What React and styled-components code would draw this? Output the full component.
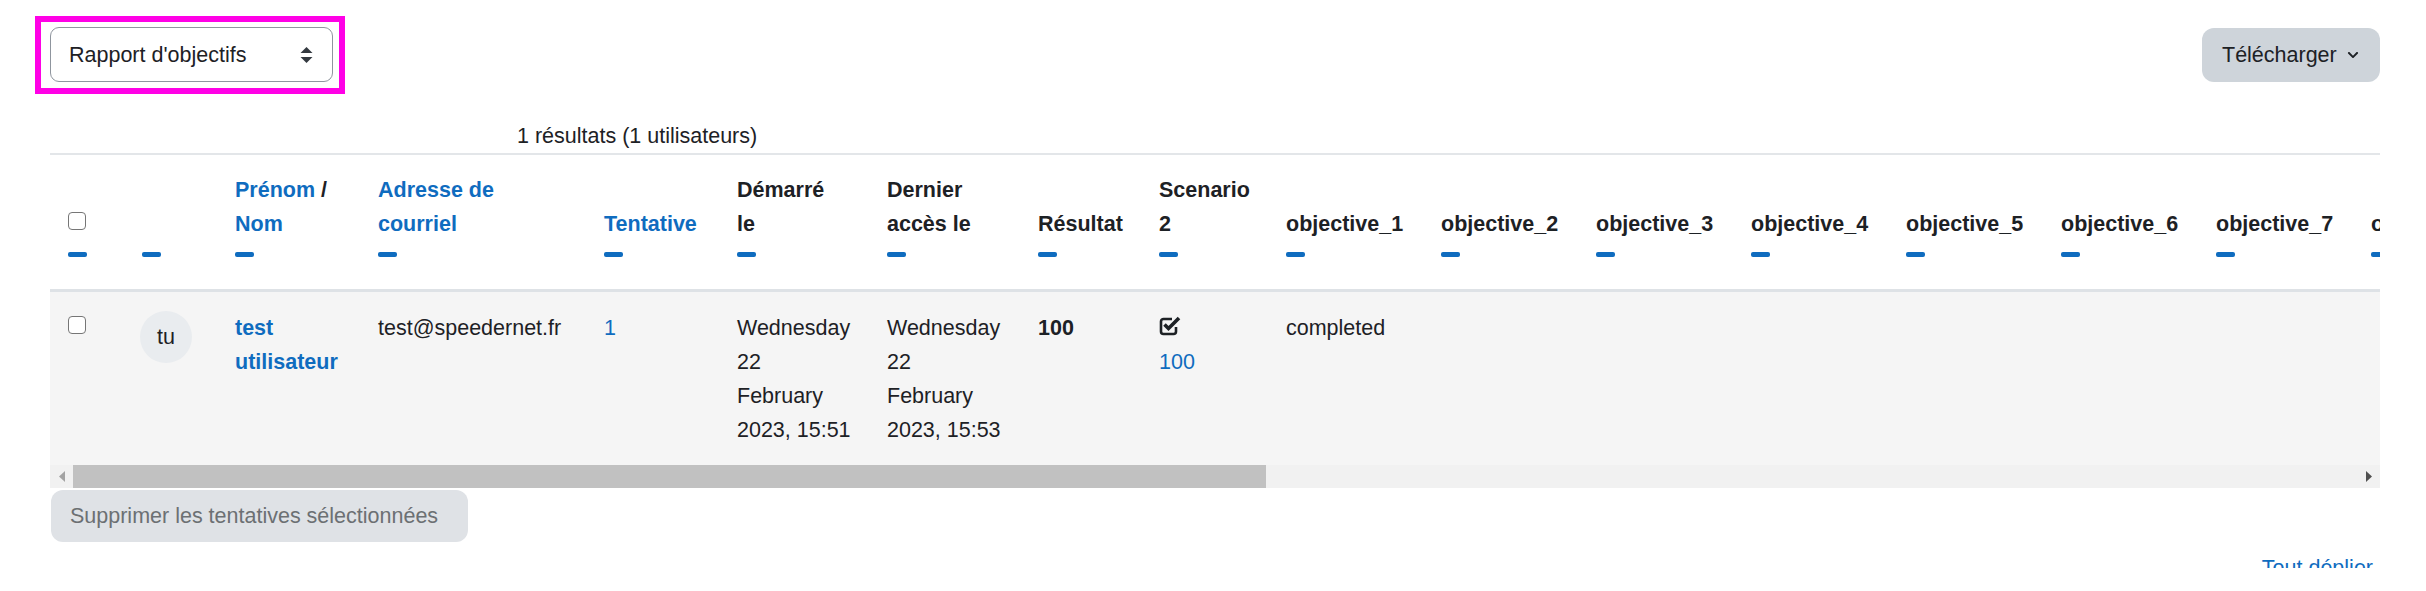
import React from "react";
import styled, { createGlobalStyle } from "styled-components";
import { FaChevronDown } from "react-icons/fa";

const GlobalStyle = createGlobalStyle`
  * { box-sizing: border-box; }
  body {
    margin: 0;
    background: #fff;
    color: #1d2125;
    font-family: "Liberation Sans", Arial, sans-serif;
    font-size: 21.5px;
    line-height: 34px;
  }
`;

const Colors = {
  Text: "#1d2125",
  Link: "#0f6cbf",
  Border: "#dee2e6",
  Stripe: "#f5f5f5",
};

const VIEW_WIDTH = 2330;

// fixed column widths, measured from the report layout
const baseCols = [74, 93, 143, 226, 133, 150, 151, 121, 127];
const objectives = Array.from({ length: 20 }, (_, i) => ({
  id: i + 1,
  label: `objective_${i + 1}`,
  width: i < 9 ? 155 : 168,
  value: i === 0 ? "completed" : "",
}));
const tableWidth =
  baseCols.reduce((a, b) => a + b, 0) + objectives.reduce((a, o) => a + o.width, 0);

const Page = styled.div`
  height: 568px;
  overflow: hidden;
  padding: 16px 46px 0 50px;
`;

const Toolbar = styled.div`
  display: flex;
  justify-content: space-between;
  align-items: center;
`;

const Highlight = styled.div`
  border: 6px solid #ff00e6;
  padding: 5px 6px 6px 9px;
  margin-left: -15px;
`;

const SelectBox = styled.div`
  width: 283px;
  height: 55px;
  border: 1px solid #8f959e;
  border-radius: 9px;
  display: flex;
  align-items: center;
  justify-content: space-between;
  padding: 0 19px 0 18px;
  color: ${Colors.Text};
`;

const DownloadButton = styled.button`
  height: 54px;
  width: 178px;
  border: none;
  border-radius: 12px;
  background: #ced4da;
  color: ${Colors.Text};
  font: inherit;
  display: flex;
  align-items: center;
  gap: 10px;
  padding: 0 0 0 20px;
`;

const ResultsLine = styled.div`
  margin-top: 25px;
  padding-left: 467px;
`;

const ScrollArea = styled.div`
  overflow-x: hidden;
  width: ${VIEW_WIDTH}px;
`;

const ScrollBar = styled.div`
  display: flex;
  height: 23px;
  background: #f1f1f1;
`;

const ScrollButton = styled.div`
  width: 23px;
  flex: none;
  display: flex;
  align-items: center;
  justify-content: center;
`;

const ScrollTrack = styled.div`
  flex: 1;
  display: flex;
`;

const ScrollThumb = styled.div`
  background: #c1c1c1;
  height: 100%;
`;

const Table = styled.table`
  border-collapse: separate;
  border-spacing: 0;
  table-layout: fixed;
  width: ${(p) => p.$width}px;
`;

const Th = styled.th`
  width: ${(p) => p.$w}px;
  text-align: left;
  vertical-align: bottom;
  font-weight: bold;
  padding: 18px;
  border-top: 2px solid #e3e6e9;
  border-bottom: 3px solid ${Colors.Border};
`;

const HeadLabel = styled.div`
  max-width: ${(p) => (p.$max ? `${p.$max}px` : "none")};
`;

const Commands = styled.div`
  height: 30px;
  padding-top: 11px;
`;

const Dash = styled.span`
  display: block;
  width: 19px;
  height: 5px;
  border-radius: 2px;
  background: ${Colors.Link};
`;

const Row = styled.tr`
  background: ${Colors.Stripe};
`;

const Td = styled.td`
  vertical-align: top;
  padding: 19px 18px 18px;
  font-weight: ${(p) => (p.$bold ? "bold" : "normal")};
`;

const Link = styled.a`
  color: ${Colors.Link};
  text-decoration: none;
  font-weight: ${(p) => (p.$bold ? "bold" : "inherit")};
`;

const Check = styled.input.attrs({ type: "checkbox" })`
  appearance: none;
  display: block;
  width: 18px;
  height: 18px;
  margin: 5px 0 11px;
  border: 1.5px solid #767676;
  border-radius: 4px;
  background: #fff;
`;

const Avatar = styled.div`
  width: 52px;
  height: 52px;
  margin-left: -2px;
  border-radius: 50%;
  background: #e9ecef;
  display: flex;
  align-items: center;
  justify-content: center;
`;

const IconLine = styled.div`
  height: 34px;
  display: flex;
  align-items: center;
  padding-bottom: 4px;
`;

const DeleteButton = styled.button`
  margin-top: 2px;
  margin-left: 1px;
  height: 52px;
  border: none;
  border-radius: 12px;
  background: #dfe2e6;
  color: #6c7073;
  font: inherit;
  padding: 0 30px 0 19px;
`;

const Footer = styled.div`
  margin-top: 9px;
  text-align: right;
  padding-right: 7px;
`;

function SortArrows() {
  return (
    <svg width="13" height="16" viewBox="0 0 13 16">
      <path d="M6.5 0 L12.5 6 L0.5 6 Z" fill="#343a40" />
      <path d="M6.5 16 L12.5 10 L0.5 10 Z" fill="#343a40" />
    </svg>
  );
}

function CheckSquare() {
  return (
    <svg width="23" height="20" viewBox="0 0 23 20">
      <path
        d="M13 3 H4.5 A2.5 2.5 0 0 0 2 5.5 V15.5 A2.5 2.5 0 0 0 4.5 18 H14.5 A2.5 2.5 0 0 0 17 15.5 V11"
        fill="none"
        stroke="#1d2125"
        strokeWidth="2.6"
      />
      <path
        d="M5.5 8.5 L9.5 12.5 L20 2"
        fill="none"
        stroke="#1d2125"
        strokeWidth="3.6"
      />
    </svg>
  );
}

function Arrow({ dir, color }) {
  return (
    <svg width="6" height="11" viewBox="0 0 6 11">
      <path d={dir === "left" ? "M6 0 V11 L0 5.5 Z" : "M0 0 V11 L6 5.5 Z"} fill={color} />
    </svg>
  );
}

function Head({ w, children, max }) {
  return (
    <Th $w={w}>
      <HeadLabel $max={max}>{children}</HeadLabel>
      <Commands>
        <Dash />
      </Commands>
    </Th>
  );
}

export default function App() {
  const thumb = (VIEW_WIDTH / tableWidth) * 100;
  return (
    <>
      <GlobalStyle />
      <Page>
        <Toolbar>
          <Highlight>
            <SelectBox>
              <span>Rapport d'objectifs</span>
              <SortArrows />
            </SelectBox>
          </Highlight>
          <DownloadButton>
            Télécharger <FaChevronDown size={12} />
          </DownloadButton>
        </Toolbar>

        <ResultsLine>1 résultats (1 utilisateurs)</ResultsLine>

        <ScrollArea>
          <Table $width={tableWidth}>
            <thead>
              <tr>
                <Th $w={baseCols[0]}>
                  <Check />
                  <Commands>
                    <Dash />
                  </Commands>
                </Th>
                <Head w={baseCols[1]} />
                <Head w={baseCols[2]}>
                  <Link href="#">Prénom</Link> / <Link href="#">Nom</Link>
                </Head>
                <Head w={baseCols[3]}>
                  <Link href="#">Adresse de courriel</Link>
                </Head>
                <Head w={baseCols[4]}>
                  <Link href="#">Tentative</Link>
                </Head>
                <Head w={baseCols[5]} max={100}>Démarré le</Head>
                <Head w={baseCols[6]}>Dernier accès le</Head>
                <Head w={baseCols[7]}>Résultat</Head>
                <Head w={baseCols[8]}>Scenario 2</Head>
                {objectives.map((o) => (
                  <Head key={o.id} w={o.width}>
                    {o.label}
                  </Head>
                ))}
              </tr>
            </thead>
            <tbody>
              <Row>
                <Td>
                  <Check />
                </Td>
                <Td>
                  <Avatar>tu</Avatar>
                </Td>
                <Td>
                  <Link href="#" $bold>
                    test utilisateur
                  </Link>
                </Td>
                <Td>test@speedernet.fr</Td>
                <Td>
                  <Link href="#">1</Link>
                </Td>
                <Td>Wednesday 22 February 2023, 15:51</Td>
                <Td>Wednesday 22 February 2023, 15:53</Td>
                <Td $bold>100</Td>
                <Td>
                  <IconLine>
                    <CheckSquare />
                  </IconLine>
                  <Link href="#">100</Link>
                </Td>
                {objectives.map((o) => (
                  <Td key={o.id}>{o.value}</Td>
                ))}
              </Row>
            </tbody>
          </Table>
        </ScrollArea>
        <ScrollBar>
          <ScrollButton>
            <Arrow dir="left" color="#a3a3a3" />
          </ScrollButton>
          <ScrollTrack>
            <ScrollThumb style={{ width: `${thumb}%` }} />
          </ScrollTrack>
          <ScrollButton>
            <Arrow dir="right" color="#505050" />
          </ScrollButton>
        </ScrollBar>

        <DeleteButton disabled>Supprimer les tentatives sélectionnées</DeleteButton>

        <Footer>
          <Link href="#">Tout déplier</Link>
        </Footer>
      </Page>
    </>
  );
}
